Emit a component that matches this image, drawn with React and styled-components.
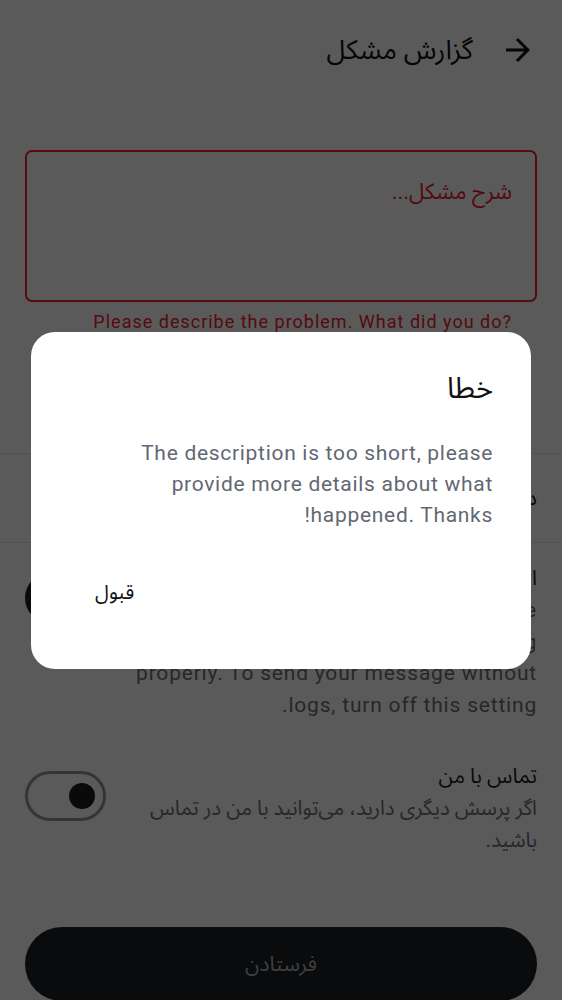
import React from "react";
import styled, { createGlobalStyle } from "styled-components";

const GlobalStyle = createGlobalStyle`
  html, body {
    margin: 0;
    padding: 0;
    background: #ffffff;
  }
  body {
    font-family: Roboto, "Noto Sans Arabic", "DejaVu Sans", sans-serif;
    color: #1b1b1f;
  }
  * { box-sizing: border-box; }
`;

const Page = styled.div`
  direction: rtl;
  width: 562px;
  min-height: 1000px;
  background: #ffffff;
  display: flex;
  flex-direction: column;
  overflow: hidden;
`;

const Header = styled.header`
  height: 100px;
  display: flex;
  align-items: center;
  gap: 27px;
  padding: 0 26px;
`;

const BackButton = styled.button`
  display: flex;
  align-items: center;
  justify-content: center;
  width: 36px;
  height: 36px;
  padding: 0;
  border: none;
  background: none;
  color: #111114;
`;

const Title = styled.h1`
  margin: 0;
  font-size: 27px;
  font-weight: 400;
  line-height: 40px;
  color: #111114;
`;

const Field = styled.div`
  padding: 50px 25px 0;
  display: flex;
  flex-direction: column;
`;

const TextArea = styled.textarea`
  direction: rtl;
  height: 152px;
  resize: none;
  border: 2px solid #f0202e;
  border-radius: 7px;
  padding: 25px 23px;
  font-family: Roboto, "Noto Sans Arabic", "DejaVu Sans", sans-serif;
  font-size: 22px;
  line-height: 30px;
  background: transparent;
  outline: none;
  &::placeholder {
    color: #f0202e;
    opacity: 1;
  }
`;

const Helper = styled.p`
  margin: 8px 0 0;
  padding-right: 25px;
  direction: ltr;
  text-align: right;
  font-size: 18px;
  line-height: 24px;
  letter-spacing: 1px;
  color: #f0202e;
`;

const Divider = styled.hr`
  margin: ${(p) => p.$top || 0}px 0 0;
  border: none;
  border-top: 1px solid #e2e2e4;
  width: 100%;
`;

const SelectRow = styled.div`
  height: 88px;
  padding: 0 25px;
  display: flex;
  align-items: center;
  font-size: 21px;
  color: #1b1b1f;
`;

const SettingRow = styled.div`
  display: flex;
  align-items: flex-start;
  gap: 24px;
  padding: 0 25px;
  margin-top: ${(p) => p.$top}px;
`;

const SettingText = styled.div`
  flex: 1;
  display: flex;
  flex-direction: column;
`;

const SettingTitle = styled.div`
  font-size: 21px;
  line-height: 34px;
  color: #1b1b1f;
`;

const SettingDesc = styled.div`
  font-size: ${(p) => (p.$latin ? 21 : 20.5)}px;
  letter-spacing: ${(p) => (p.$latin ? 0.8 : 0)}px;
  line-height: 31.5px;
  color: #6b7079;
`;

const Switch = styled.div`
  flex: none;
  width: 81px;
  height: 50px;
  margin-top: 12px;
  border-radius: 25px;
  border: 3px solid ${(p) => (p.$on ? "#1c1f25" : "#8f96a1")};
  background: ${(p) => (p.$on ? "#1c1f25" : "transparent")};
  display: flex;
  align-items: center;
  justify-content: flex-start;
  padding: 0 8px;
`;

const Thumb = styled.span`
  width: ${(p) => (p.$on ? 34 : 26)}px;
  height: ${(p) => (p.$on ? 34 : 26)}px;
  border-radius: 50%;
  background: ${(p) => (p.$on ? "#ffffff" : "#1c1d22")};
  margin-right: ${(p) => (p.$on ? "auto" : "0")};
`;

const SubmitWrap = styled.div`
  padding: 71px 25px 0;
`;

const SubmitButton = styled.button`
  width: 100%;
  height: 74px;
  border: none;
  border-radius: 37px;
  background: #1c1f25;
  color: #b0b0b3;
  font-family: Roboto, "Noto Sans Arabic", "DejaVu Sans", sans-serif;
  font-size: 21px;
`;

const Overlay = styled.div`
  position: fixed;
  inset: 0;
  background: rgba(0, 0, 0, 0.647);
  display: flex;
  align-items: center;
  justify-content: center;
  direction: rtl;
`;

const Dialog = styled.div`
  width: 500px;
  height: 337px;
  background: #ffffff;
  border-radius: 24px;
  padding: 36px 38px 0;
  display: flex;
  flex-direction: column;
`;

const DialogTitle = styled.h2`
  margin: 0;
  font-size: 29px;
  font-weight: 400;
  line-height: 40px;
  color: #111114;
`;

const DialogBody = styled.p`
  margin: 30px 0 0;
  font-size: 21px;
  letter-spacing: 0.7px;
  line-height: 31px;
  color: #626872;
`;

const Actions = styled.div`
  margin-top: 36px;
  display: flex;
  justify-content: flex-end;
  margin-left: -38px;
  padding-left: 38px;
`;

const TextButton = styled.button`
  height: 52px;
  padding: 0 26px;
  border: none;
  background: none;
  font-family: Roboto, "Noto Sans Arabic", "DejaVu Sans", sans-serif;
  font-size: 20px;
  color: #111114;
`;

const ArrowForward = () => (
  <svg width="36" height="36" viewBox="0 0 24 24" fill="currentColor" aria-hidden="true">
    <path d="M12 4l-1.41 1.41L16.17 11H4v2h12.17l-5.58 5.59L12 20l8-8z" />
  </svg>
);

export default function App() {
  return (
    <>
      <GlobalStyle />
      <Page>
        <Header>
          <BackButton aria-label="back">
            <ArrowForward />
          </BackButton>
          <Title>گزارش مشکل</Title>
        </Header>

        <Field>
          <TextArea placeholder="شرح مشکل..." />
          <Helper>Please describe the problem. What did you do?</Helper>
        </Field>

        <Divider $top={119} />
        <SelectRow>دسته‌بندی</SelectRow>
        <Divider />

        <SettingRow $top={18}>
          <SettingText>
            <SettingTitle>ارسال لاگ‌ها</SettingTitle>
            <SettingDesc $latin>
              Logs help us to find the cause of the
              issue when the app is not working
              properly. To send your message without logs, turn off
              this setting.
            </SettingDesc>
          </SettingText>
          <Switch $on>
            <Thumb $on />
          </Switch>
        </SettingRow>

        <SettingRow $top={38}>
          <SettingText>
            <SettingTitle>تماس با من</SettingTitle>
            <SettingDesc>
              اگر پرسش دیگری دارید، می‌توانید با من در تماس باشید.
            </SettingDesc>
          </SettingText>
          <Switch>
            <Thumb />
          </Switch>
        </SettingRow>

        <SubmitWrap>
          <SubmitButton>فرستادن</SubmitButton>
        </SubmitWrap>
      </Page>

      <Overlay>
        <Dialog role="alertdialog">
          <DialogTitle>خطا</DialogTitle>
          <DialogBody>
            The description is too short, please provide more details about
            what happened. Thanks!
          </DialogBody>
          <Actions>
            <TextButton>قبول</TextButton>
          </Actions>
        </Dialog>
      </Overlay>
    </>
  );
}
